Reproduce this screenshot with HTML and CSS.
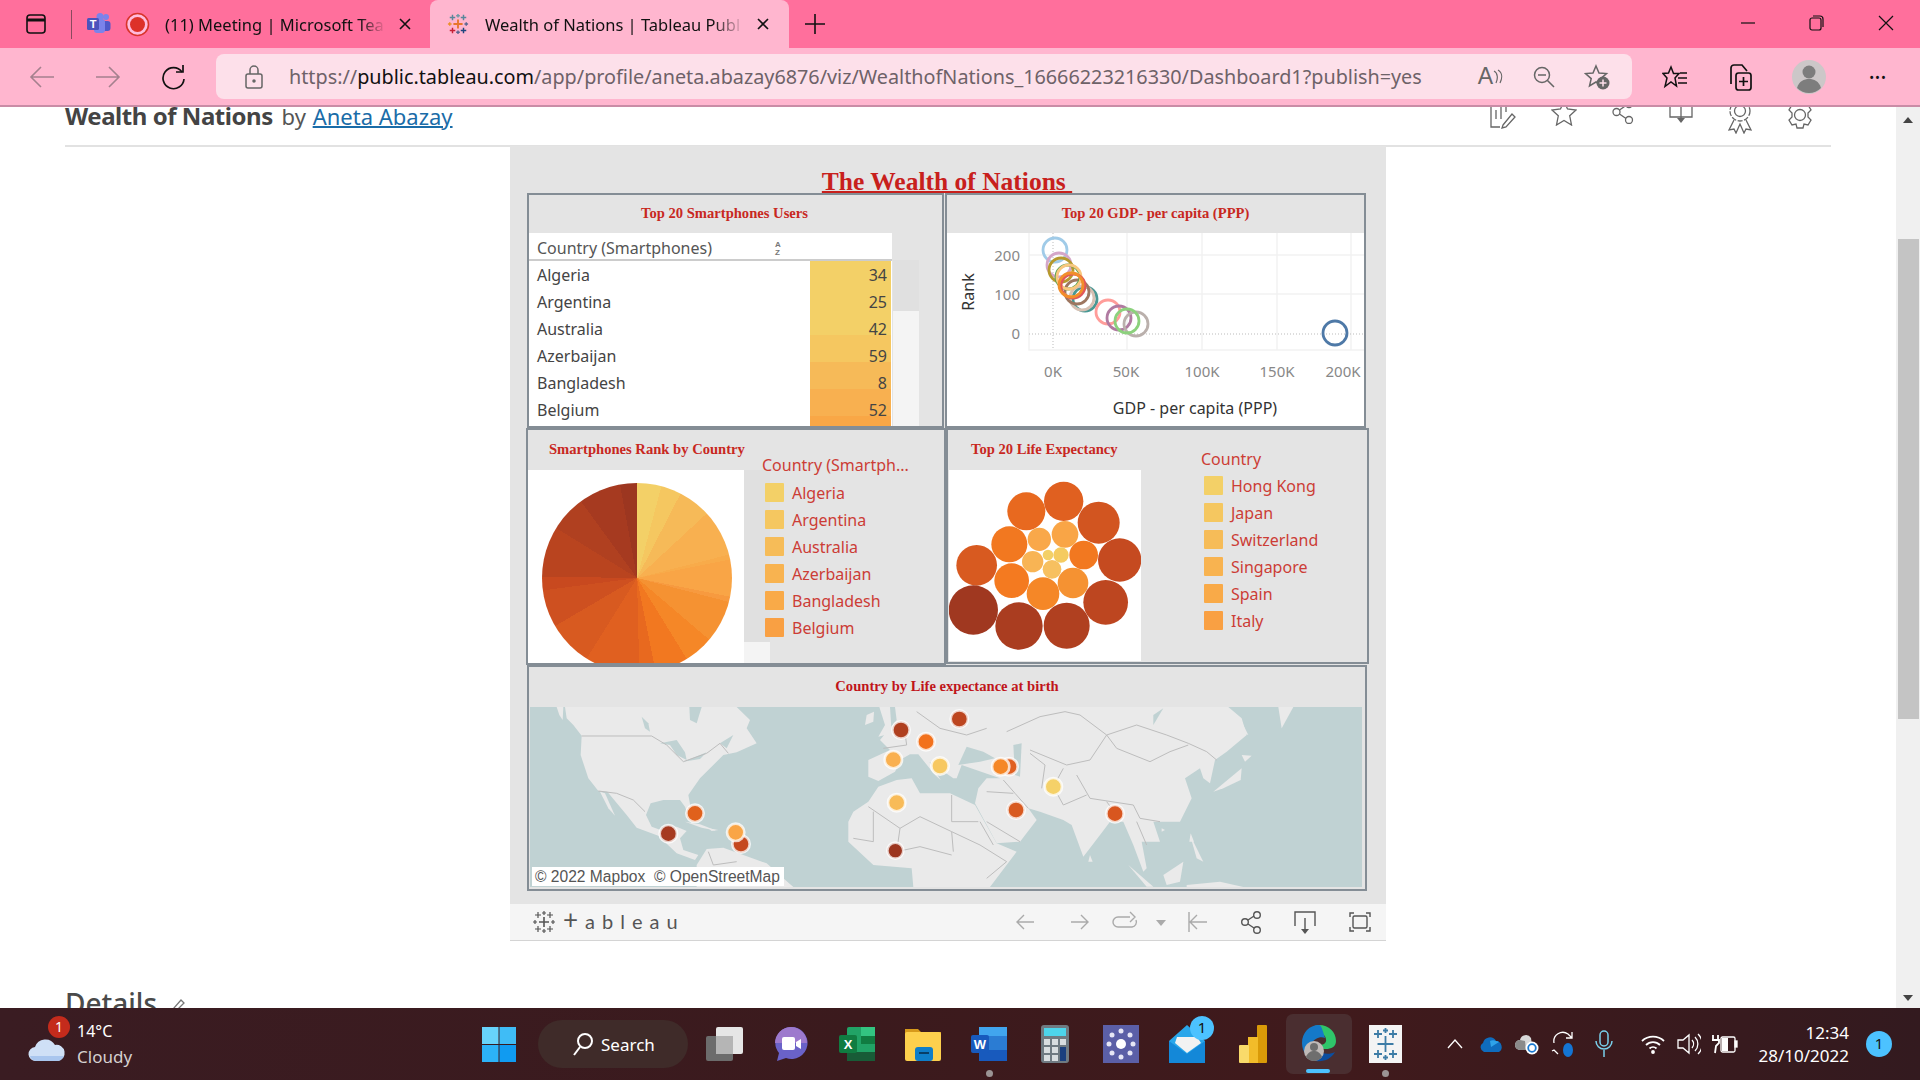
FILE: index.html
```html
<!DOCTYPE html>
<html lang="en">
<head>
  <meta charset="UTF-8" />
  <title>Wealth of Nations | Tableau Public</title>
  <link rel="stylesheet" href="styles.css">
</head>
<body>

  <svg class="defs" width="0" height="0">
    <symbol id="tab-logo" viewBox="0 0 24 24">
      <g fill="none" stroke-width="1.6">
        <path d="M12 7v10M7 12h10" stroke="#e8762b" stroke-width="2"/>
        <path d="M6 2v6M3 5h6" stroke="#5b879b"/>
        <path d="M18 2v6M15 5h6" stroke="#59879b"/>
        <path d="M6 16v6M3 19h6" stroke="#c72035"/>
        <path d="M18 16v6M15 19h6" stroke="#1f457e"/>
        <path d="M12 1v4M10 3h4" stroke="#7099a6"/>
        <path d="M12 19v4M10 21h4" stroke="#5b6591"/>
        <path d="M3 10v4M1 12h4" stroke="#eb912b"/>
        <path d="M21 10v4M19 12h4" stroke="#5c6692"/>
      </g>
    </symbol>
    <symbol id="mono-logo" viewBox="0 0 24 24">
      <g fill="none" stroke-width="1.2">
        <path d="M12 7v10M7 12h10" stroke-width="1.6"/>
        <path d="M6 2v6M3 5h6M18 2v6M15 5h6M6 16v6M3 19h6M18 16v6M15 19h6"/>
        <path d="M12 1v4M10 3h4M12 19v4M10 21h4M3 10v4M1 12h4M21 10v4M19 12h4"/>
      </g>
    </symbol>
  </svg>

  <div class="tabstrip">
    <svg class="tab-side" width="20" height="20" viewBox="0 0 20 20" fill="none" stroke="#111" stroke-width="1.6"><rect x="1" y="1" width="18" height="18" rx="3"/><path d="M1 6h18" stroke-width="3"/></svg>
    <span class="tab-sep"></span>
    <svg class="tab-teams" width="25" height="22" viewBox="0 0 25 22"><circle cx="20" cy="4" r="3" fill="#7b83eb"/><circle cx="14" cy="3.5" r="3.5" fill="#7b83eb"/><rect x="16" y="8" width="8.5" height="10" rx="3" fill="#5059c9"/><rect x="8" y="6" width="11" height="14" rx="3" fill="#7b83eb"/><rect x="1" y="5" width="12" height="12" rx="1.5" fill="#4b53bc"/><text x="7" y="14.5" class="teams-t">T</text></svg>
    <svg class="tab-rec" width="25" height="25" viewBox="0 0 25 25"><circle cx="12.5" cy="12.5" r="11" fill="#fbd" stroke="#d9342b" stroke-width="1.6"/><circle cx="12.5" cy="12.5" r="7.5" fill="#dd3129"/></svg>
    <span class="tab-title tab-title-off">(11) Meeting | Microsoft Tea</span>
    <svg class="tab-x" width="14" height="14" viewBox="0 0 14 14" stroke="#111" stroke-width="1.6"><path d="M2 2l10 10M12 2L2 12"/></svg>
    <div class="tab-active">
      <svg width="22" height="22"><use href="#tab-logo"/></svg>
      <span class="tab-title tab-title-on">Wealth of Nations | Tableau Publ</span>
      <svg class="tab-x" width="14" height="14" viewBox="0 0 14 14" stroke="#111" stroke-width="1.6"><path d="M2 2l10 10M12 2L2 12"/></svg>
    </div>
    <svg class="tab-plus" width="22" height="22" viewBox="0 0 22 22" stroke="#111" stroke-width="1.6"><path d="M11 1v20M1 11h20"/></svg>
    <div class="win-btns">
      <span class="win-btn"><svg width="14" height="14" viewBox="0 0 14 14" stroke="#111" stroke-width="1.2"><path d="M0 7h14"/></svg></span>
      <span class="win-btn"><svg width="15" height="16" viewBox="0 0 15 16" fill="none" stroke="#111" stroke-width="1.2"><rect x="1" y="3" width="11" height="12" rx="2"/><path d="M4 1h7a3 3 0 0 1 3 3v8"/></svg></span>
      <span class="win-btn"><svg width="16" height="16" viewBox="0 0 16 16" stroke="#111" stroke-width="1.2"><path d="M1 1l14 14M15 1L1 15"/></svg></span>
    </div>
  </div>

  <div class="toolbar">
    <span class="nav-btn"><svg width="26" height="24" viewBox="0 0 26 24" fill="none" stroke="#a5808e" stroke-width="1.6"><path d="M25 12H2M12 2L2 12l10 10"/></svg></span>
    <span class="nav-btn"><svg width="26" height="24" viewBox="0 0 26 24" fill="none" stroke="#a5808e" stroke-width="1.6"><path d="M1 12h23M14 2l10 10-10 10"/></svg></span>
    <span class="nav-btn"><svg width="26" height="26" viewBox="0 0 26 26" fill="none" stroke="#111" stroke-width="1.7"><path d="M21 8a10.500 10.500 0 1 0 2 7"/><path d="M22 1v7h-7"/></svg></span>
    <div class="address">
      <svg class="addr-lock" width="20" height="24" viewBox="0 0 20 24" fill="none" stroke="#666" stroke-width="1.5"><rect x="2" y="9" width="16" height="14" rx="2"/><path d="M6 9V5a4 4 0 0 1 8 0v4"/><circle cx="10" cy="16" r="1" fill="#666"/></svg>
      <span class="url">https://<b>public.tableau.com</b>/app/profile/aneta.abazay6876/viz/WealthofNations_16666223216330/Dashboard1?publish=yes</span>
      <div class="addr-icons">
        <span class="addr-btn addr-read">A<svg width="10" height="16" viewBox="0 0 10 16" fill="none" stroke="#666" stroke-width="1.2"><path d="M1 2c4 2 4 8 2 12M5 1c5 3 4 9 2 13"/></svg></span>
        <span class="addr-btn"><svg width="24" height="24" viewBox="0 0 24 24" fill="none" stroke="#666" stroke-width="1.5"><circle cx="10" cy="10" r="7.500"/><path d="M6 10h8M15.500 15.500L22 22"/></svg></span>
        <span class="addr-btn"><svg width="26" height="26" viewBox="0 0 26 26"><path d="M12 2l3 7 7.500.6-5.700 5 1.700 7.400L12 18l-6.500 4 1.700-7.400-5.700-5L9 9z" fill="none" stroke="#666" stroke-width="1.500"/><circle cx="19" cy="19" r="6.500" fill="#666"/><path d="M19 15.500v7M15.500 19h7" stroke="#fde0ea" stroke-width="1.500"/></svg></span>
      </div>
    </div>
    <span class="tool-btn tool-fav"><svg width="26" height="26" viewBox="0 0 26 26" fill="none" stroke="#111" stroke-width="1.500"><path d="M9 3l2.500 6.500H17l-4 4.500 1.500 8L9 18l-6 4.500L5 14 1 9.500l5.500-.5zM18 9h7M16 14h9M16 19h9"/></svg></span>
    <span class="tool-btn tool-coll"><svg width="26" height="28" viewBox="0 0 26 28" fill="none" stroke="#111" stroke-width="1.700"><path d="M5 21V5a3 3 0 0 1 3-3h8l5 6"/><rect x="10" y="10" width="15" height="17" rx="2.500"/><path d="M17.500 14v9M13 18.500h9"/></svg></span>
    <span class="tool-btn tool-profile"><svg width="34" height="34" viewBox="0 0 34 34"><circle cx="17" cy="17" r="17" fill="#ccc7c8"/><circle cx="17" cy="12" r="6.500" fill="#7d7d7d"/><path d="M5 28c2-7 7-9 12-9s10 2 12 9a17 17 0 0 1-24 0z" fill="#7d7d7d"/></svg></span>
    <span class="tool-btn tool-dots">&#8226;&#8226;&#8226;</span>
  </div>

  <div class="content">
    <div class="page">
      <div class="page-head">
        <div class="page-title"><strong>Wealth of Nations</strong> <span>by</span> <a href="#">Aneta Abazay</a></div>
        <div class="page-icons">
          <svg width="26" height="32" viewBox="0 0 26 32" fill="none" stroke="#666" stroke-width="1.300"><path d="M1 0v27h9M6 10v9M11 6v13M16 2v10"/><path d="M13 25l9-11 3 3-9 10-4 1z"/></svg>
          <svg width="26" height="26" viewBox="0 0 26 26" fill="none" stroke="#666" stroke-width="1.300"><path d="M13 1l3.500 8L25 10l-6.300 5.800L20.500 25 13 20.500 5.500 25l1.800-9.200L1 10l8.500-1z"/></svg>
          <svg width="22" height="24" viewBox="0 0 22 24" fill="none" stroke="#666" stroke-width="1.300"><circle cx="17" cy="4" r="3.500"/><circle cx="4.500" cy="12" r="3.500"/><circle cx="17" cy="20" r="3.500"/><path d="M7.500 10l6.500-4.500M7.500 14l6.500 4.500"/></svg>
          <svg width="24" height="24" viewBox="0 0 24 24" fill="none" stroke="#666" stroke-width="1.300"><path d="M1 0v17h22V0M12 5v14"/><path d="M8 18h8l-4 5z" fill="#666" stroke="none"/></svg>
          <svg width="24" height="34" viewBox="0 0 24 34" fill="none" stroke="#666" stroke-width="1.300"><circle cx="12" cy="11" r="10" stroke-dasharray="5 1.500"/><circle cx="12" cy="11" r="5.500"/><path d="M6 20L1 30l5-1 2 4 4-9 4 9 2-4 5 1-5-10"/></svg>
          <svg width="26" height="30" viewBox="0 0 26 30" fill="none" stroke="#666" stroke-width="1.300"><circle cx="13" cy="15" r="5.500"/><path d="M10 2h6l1 4 4-1 3 5-3 3v4l3 3-3 5-4-1-1 4h-6l-1-4-4 1-3-5 3-3v-4L2 10l3-5 4 1z"/></svg>
        </div>
      </div>

      <div class="viz">
        <div class="viz-title">The Wealth of Nations </div>

        <div class="viz-row">
          <section class="panel panel-table">
            <h3 class="panel-title">Top 20 Smartphones Users</h3>
            <div class="table-wrap">
              <div class="table">
                <div class="table-head">Country (Smartphones)<span class="sort-az">A<br>Z</span></div>
                <div class="table-body">
                  <div class="row"><span>Algeria</span><span>34</span></div>
                  <div class="row"><span>Argentina</span><span>25</span></div>
                  <div class="row"><span>Australia</span><span>42</span></div>
                  <div class="row"><span>Azerbaijan</span><span>59</span></div>
                  <div class="row"><span>Bangladesh</span><span>8</span></div>
                  <div class="row"><span>Belgium</span><span>52</span></div>
                </div>
              </div>
              <div class="vscroll vscroll-table"><div class="vthumb"></div></div>
            </div>
          </section>

          <section class="panel panel-scatter">
            <h3 class="panel-title">Top 20 GDP- per capita (PPP)</h3>
            <svg class="scatter" width="417" height="193" viewBox="947 233 417 193">
              <g stroke="#f2f2f2" stroke-width="1.500" fill="none">
                <path d="M1029 233v117h335M1127 233v117M1202 233v117M1277 233v117M1351 233v117M1029 255h335M1029 294h335"/>
              </g>
              <path d="M1053 233v117M1029 334h335" stroke="#bbb" stroke-dasharray="1 2" fill="none"/>
              <g class="sc-axis">
                <text x="1020" y="261" text-anchor="end">200</text>
                <text x="1020" y="300" text-anchor="end">100</text>
                <text x="1020" y="339" text-anchor="end">0</text>
                <text x="1053" y="377" text-anchor="middle">0K</text>
                <text x="1126" y="377" text-anchor="middle">50K</text>
                <text x="1202" y="377" text-anchor="middle">100K</text>
                <text x="1277" y="377" text-anchor="middle">150K</text>
                <text x="1343" y="377" text-anchor="middle">200K</text>
              </g>
              <text class="sc-label" transform="translate(974 292) rotate(-90)" text-anchor="middle">Rank</text>
              <text class="sc-label" x="1195" y="414" text-anchor="middle">GDP - per capita (PPP)</text>
              <g fill="none" stroke-width="2.800">
                <circle cx="1055" cy="250" r="12" stroke="#a0cbe8"/>
                <circle cx="1059" cy="265" r="12" stroke="#d4a6c8"/>
                <circle cx="1061" cy="270" r="12" stroke="#b6992d"/>
                <circle cx="1085" cy="299" r="12" stroke="#499894"/>
                <circle cx="1082" cy="298" r="12" stroke="#d7c0b3"/>
                <circle cx="1077" cy="292" r="12" stroke="#9d7660"/>
                <circle cx="1068" cy="277" r="12" stroke="#59a14f"/>
                <circle cx="1069" cy="277" r="12" stroke="#f9c77f"/>
                <circle cx="1072" cy="285" r="12" stroke="#f1ce63"/>
                <circle cx="1073" cy="286" r="12" stroke="#e15759"/>
                <circle cx="1071" cy="285" r="12" stroke="#f28e2b"/>
                <circle cx="1108" cy="312" r="12" stroke="#ff9d9a"/>
                <circle cx="1119" cy="318" r="12" stroke="#b07aa1"/>
                <circle cx="1136" cy="324" r="12" stroke="#bab0ac"/>
                <circle cx="1127" cy="321" r="12" stroke="#8cd17d"/>
                <circle cx="1335" cy="333" r="12" stroke="#4e79a7"/>
              </g>
            </svg>
          </section>
        </div>

        <div class="viz-row viz-row-mid">
          <section class="panel panel-pie">
            <div class="plot-col">
              <h3 class="panel-title title-left">Smartphones Rank by Country</h3>
              <div class="plot-body">
                <div class="pie-box"><div class="pie"></div></div>
                <div class="vscroll vscroll-pie"><div class="vthumb"></div></div>
              </div>
            </div>
            <div class="legend legend-pie">
              <div class="legend-title">Country (Smartph...</div>
              <div class="legend-item"><i class="c1"></i>Algeria</div>
              <div class="legend-item"><i class="c2"></i>Argentina</div>
              <div class="legend-item"><i class="c3"></i>Australia</div>
              <div class="legend-item"><i class="c4"></i>Azerbaijan</div>
              <div class="legend-item"><i class="c5"></i>Bangladesh</div>
              <div class="legend-item"><i class="c6"></i>Belgium</div>
            </div>
          </section>

          <section class="panel panel-bubble">
            <div class="plot-col plot-col-bubble">
              <h3 class="panel-title title-left">Top 20 Life Expectancy</h3>
              <svg class="bubbles" width="192" height="191" viewBox="27 135 576 573">
                <circle cx="371" cy="229" r="59" fill="#e06020"/>
                <circle cx="259" cy="259" r="57" fill="#e8691f"/>
                <circle cx="476" cy="293" r="63" fill="#d25520"/>
                <circle cx="539" cy="405" r="65" fill="#c54a20"/>
                <circle cx="208" cy="358" r="54" fill="#f27820"/>
                <circle cx="110" cy="421" r="61" fill="#d85a20"/>
                <circle cx="298" cy="343" r="35" fill="#f9a84a"/>
                <circle cx="375" cy="328" r="40" fill="#f9a546"/>
                <circle cx="431" cy="390" r="43" fill="#f27820"/>
                <circle cx="324" cy="390" r="16" fill="#f3d067"/>
                <circle cx="363" cy="390" r="23" fill="#f5cb60"/>
                <circle cx="278" cy="410" r="32" fill="#f8b454"/>
                <circle cx="336" cy="433" r="28" fill="#f7c060"/>
                <circle cx="215" cy="467" r="52" fill="#f47a20"/>
                <circle cx="399" cy="474" r="46" fill="#f59232"/>
                <circle cx="309" cy="506" r="49" fill="#f58727"/>
                <circle cx="100" cy="555" r="74" fill="#a03820"/>
                <circle cx="237" cy="603" r="71" fill="#aa3d20"/>
                <circle cx="380" cy="602" r="69" fill="#b04020"/>
                <circle cx="497" cy="532" r="67" fill="#bd4620"/>
              </svg>
            </div>
            <div class="legend legend-bubble">
              <div class="legend-title">Country</div>
              <div class="legend-item"><i class="c1"></i>Hong Kong</div>
              <div class="legend-item"><i class="c2"></i>Japan</div>
              <div class="legend-item"><i class="c3"></i>Switzerland</div>
              <div class="legend-item"><i class="c4"></i>Singapore</div>
              <div class="legend-item"><i class="c5"></i>Spain</div>
              <div class="legend-item"><i class="c6"></i>Italy</div>
            </div>
          </section>
        </div>

        <section class="panel panel-map">
          <h3 class="panel-title title-map">Country by Life expectance at birth</h3>
          <div class="map">
            <svg width="832" height="180" viewBox="30 126 2496 540">
              <rect x="30" y="126" width="2496" height="540" fill="#c0d2d3"/>
              <g fill="#eaeaea">
                <path d="M110 126L130 126L128 165L118 150Z"/>
                <path d="M135 126L140 160L160 180L185 212L182 270L205 340L235 378L262 380L320 450L350 488L415 512L470 565L525 585L535 570L490 555L480 520L500 498L470 485L430 498L395 485L378 450L392 415L430 405L480 405L495 425L510 465L515 445L505 390L540 340L580 300L610 270L650 262L710 235L680 190L690 165L650 126Z"/>
                <path d="M240 380L255 385L285 452L265 430Z"/>
                <path d="M530 600L560 552L610 548L670 570L740 595L790 640L820 666L530 666Z"/>
                <path d="M495 470L540 478L590 497L545 488Z"/>
                <path d="M565 490L595 495L575 498Z"/>
                <path d="M1035 180L1040 150L1062 140L1060 170Z"/>
                <path d="M1078 126L1110 126L1115 205L1075 215L1095 180Z"/>
                <path d="M1125 126L1130 165L1080 225L1110 255L1045 285L1045 335L1075 348L1125 320L1145 282L1170 268L1195 268L1245 330L1262 345L1228 290L1300 340L1310 340L1325 300L1440 340L1400 340L1375 370L1365 415L1430 535L1500 530L1550 465L1525 430L1560 440L1630 465L1655 480L1690 575L1740 510L1770 470L1810 470L1840 540L1870 620L1880 610L1865 530L1920 530L1900 470L1980 470L2015 400L1995 340L2040 310L2050 340L2070 355L2085 285L2120 260L2180 210L2165 160L2125 126Z"/>
                <path d="M985 470L1000 440L1045 410L1075 365L1130 345L1175 340L1200 385L1290 385L1365 420L1430 535L1490 560L1410 666L1180 666L1175 610L1060 600L985 530Z"/>
                <path d="M1710 570L1718 590L1705 590Z"/>
                <path d="M2080 380L2165 310L2162 345L2110 370Z"/>
                <path d="M2165 270L2195 272L2175 290Z"/>
                <path d="M2165 170L2185 210L2172 205Z"/>
                <path d="M2012 505L2022 530L2008 530Z"/>
                <path d="M1925 490L1935 495L1925 500Z"/>
                <path d="M2275 126L2320 126L2285 190Z"/>
                <path d="M1825 600L1900 665L1880 665Z"/>
                <path d="M1930 630L1990 590L1980 650L1940 660Z"/>
                <path d="M2010 510L2050 590L2030 580Z"/>
                <path d="M2000 660L2100 650L2170 666L2000 666Z"/>
              </g>
              <g fill="#c0d2d3">
                <path d="M508 126L545 126L530 175L510 165Z"/>
                <path d="M365 155L385 175L390 200L375 190Z"/>
                <path d="M420 235L470 225L495 262L500 285L470 270L450 240Z"/>
                <path d="M490 290L560 262L540 282Z"/>
                <path d="M600 235L640 210L620 250Z"/>
                <path d="M1315 300L1340 245L1390 260L1425 280L1380 290Z"/>
                <path d="M1480 240L1505 235L1500 335L1485 330Z"/>
                <path d="M1900 150L1930 130L1900 180Z"/>
              </g>
              <g fill="none" stroke="#bdbdbd" stroke-width="3">
                <path d="M185 213L395 213L440 240L490 290L560 265L600 235L625 265"/>
                <path d="M235 378L290 385L340 405L375 440"/>
                <path d="M565 560L580 600L650 590M1090 250L1160 240L1150 170M1190 140L1260 190L1340 210L1400 190"/>
                <path d="M1460 200L1560 155L1635 140L1680 150L1760 210L1850 180L1940 210L2005 235L2060 260L2090 285"/>
                <path d="M1760 210L1790 250L1890 290L1950 260L2005 240"/>
                <path d="M1530 255L1640 300L1710 285L1760 210"/>
                <path d="M1670 330L1710 400L1840 420L1860 460L1920 470"/>
                <path d="M1565 370L1575 300L1530 265M1630 310L1600 365L1630 420L1700 390"/>
                <path d="M1450 345L1485 385L1525 430M1400 380L1480 385"/>
                <path d="M1295 390L1295 470L1375 470M1380 470L1420 540M1045 425L1140 490L1200 455L1295 500L1300 560"/>
                <path d="M1060 440L1060 530M1140 490L1130 560L1200 545L1295 570M1000 520L1060 530"/>
                <path d="M1295 500L1380 540L1460 590L1400 640"/>
                <path d="M1760 410L1790 450M1850 470L1880 540M1400 470L1500 530"/>
              </g>
              <g stroke="#fff" stroke-opacity=".75" stroke-width="8">
                <circle cx="1143" cy="195" r="26" fill="#b04020"/>
                <circle cx="1218" cy="230" r="26" fill="#f2711c"/>
                <circle cx="1120" cy="284" r="26" fill="#f9b050"/>
                <circle cx="1260" cy="303" r="26" fill="#f7c860"/>
                <circle cx="1130" cy="413" r="26" fill="#f8bb58"/>
                <circle cx="525" cy="445" r="26" fill="#e0611c"/>
                <circle cx="445" cy="506" r="26" fill="#a63a20"/>
                <circle cx="663" cy="537" r="26" fill="#c5481f"/>
                <circle cx="647" cy="502" r="26" fill="#f9a546"/>
                <circle cx="1126" cy="557" r="24" fill="#9c3620"/>
                <circle cx="1318" cy="162" r="26" fill="#bd4620"/>
                <circle cx="1467" cy="305" r="26" fill="#e06020"/>
                <circle cx="1442" cy="305" r="26" fill="#f58727"/>
                <circle cx="1600" cy="365" r="26" fill="#f5d168"/>
                <circle cx="1488" cy="435" r="26" fill="#d85a20"/>
                <circle cx="1785" cy="446" r="26" fill="#d8561f"/>
              </g>
            </svg>
            <span class="map-credit">&copy; 2022 Mapbox&nbsp; &copy; OpenStreetMap</span>
          </div>
        </section>

        <div class="viz-toolbar">
          <svg class="viz-logo" width="24" height="24"><use href="#mono-logo"/></svg>
          <span class="viz-wordmark"><span>+</span>ableau</span>
          <svg class="viz-tools" width="366" height="26" viewBox="1010 908 366 26" fill="none" stroke-width="1.400">
            <g stroke="#aaa">
              <path d="M1034 921h-17M1024 914l-7 7 7 7"/>
              <path d="M1071 921h17M1081 914l7 7-7 7"/>
              <path d="M1130 916h-12a5 5 0 0 0 0 10h14a5 5 0 0 0 4-7M1130 911l5 5-5 5"/>
              <path d="M1189 911v20M1207 921h-17M1197 914l-7 7 7 7"/>
            </g>
            <path d="M1156 919h10l-5 6z" fill="#aaa"/>
            <g stroke="#555">
              <circle cx="1257" cy="914" r="3.300"/><circle cx="1245" cy="921" r="3.300"/><circle cx="1257" cy="929" r="3.300"/>
              <path d="M1248 919l6-4M1248 923l6 4"/>
              <path d="M1295 925v-14h20v14M1305 917v13"/>
              <path d="M1350 916v-4h4M1366 912h4v4M1350 926v4h4M1366 930h4v-4"/>
              <rect x="1353" y="915" width="14" height="12" rx="1.500"/>
            </g>
            <path d="M1301 928h8l-4 5z" fill="#555"/>
          </svg>
        </div>
      </div>

      <div class="details">Details
        <svg width="15" height="16" viewBox="0 0 15 16" fill="none" stroke="#777" stroke-width="1.300"><path d="M1 15l2-5L11 1l3 3-8 8z"/></svg>
      </div>
    </div>

    <div class="scrollbar">
      <span class="arrow-up"></span>
      <div class="scroll-thumb"></div>
      <span class="arrow-down"></span>
    </div>
  </div>

  <div class="taskbar">
    <div class="weather">
      <div class="weather-icon">
        <svg width="38" height="30" viewBox="0 0 38 30"><path d="M8 29a7 7 0 0 1-1-14 11 11 0 0 1 20-2 8 8 0 0 1 3 16z" fill="#cfe0f6"/><path d="M8 29a7 7 0 0 1-6-5h34a8 8 0 0 1-6 5z" fill="#a9c6ee"/></svg>
        <span class="badge badge-red">1</span>
      </div>
      <div class="weather-text"><div>14&deg;C</div><div class="weather-sub">Cloudy</div></div>
    </div>
    <svg class="win-logo" width="34" height="35" viewBox="0 0 34 35"><rect width="16.500" height="17" fill="#67d3fb"/><rect x="17.500" width="16.500" height="17" fill="#3fbcf6"/><rect y="18" width="16.500" height="17" fill="#2cb2f7"/><rect x="17.500" y="18" width="16.500" height="17" fill="#109bf1"/></svg>
    <div class="search-pill">
      <svg width="20" height="24" viewBox="0 0 20 24" fill="none" stroke="#fff" stroke-width="2"><circle cx="12" cy="9" r="7"/><path d="M7 15l-6 8"/></svg>
      Search
    </div>
    <div class="task-apps">
      <span class="app"><svg width="38" height="34" viewBox="0 0 38 34"><rect x="10" y="0" width="27" height="27" rx="2" fill="#e6e6e6"/><rect x="0" y="9" width="27" height="25" rx="2" fill="#6c6c6c"/><rect x="10" y="9" width="17" height="18" fill="#b5b5b5"/></svg></span>
      <span class="app"><svg width="34" height="36" viewBox="0 0 34 36"><path d="M17 1a16 16 0 1 1-5 31l-9 3 2-8A16 16 0 0 1 17 1z" fill="#6a62c8"/><path d="M17 1a16 16 0 0 1 16 16H1A16 16 0 0 1 17 1z" fill="#9d79cd"/><rect x="8" y="11" width="13" height="13" rx="2" fill="#fff"/><path d="M22 16l5-3v10l-5-3z" fill="#fff"/></svg></span>
      <span class="app"><svg width="36" height="34" viewBox="0 0 36 34"><rect x="8" width="28" height="34" rx="2" fill="#21a366"/><rect x="22" width="14" height="9" fill="#33c481"/><rect x="8" y="25" width="28" height="9" fill="#185c37"/><rect x="22" y="9" width="14" height="8" fill="#107c41"/><rect y="8" width="18" height="18" rx="2" fill="#107c41"/><text x="9" y="22" class="app-t">X</text></svg></span>
      <span class="app"><svg width="36" height="34" viewBox="0 0 36 34"><path d="M0 2h13l3 3h20v8H0z" fill="#d79a1b"/><rect y="5" width="36" height="29" rx="2" fill="#fdd04d"/><rect x="10" y="20" width="18" height="14" rx="3" fill="#0f7ec8"/><rect x="14" y="25" width="10" height="2" fill="#083e66"/></svg></span>
      <span class="app app-dot"><svg width="36" height="38" viewBox="0 0 36 38"><rect x="8" y="2" width="28" height="34" rx="2" fill="#2b7cd3"/><rect x="8" y="2" width="28" height="9" fill="#41a5ee"/><rect x="8" y="25" width="28" height="11" fill="#185abd"/><rect y="10" width="18" height="18" rx="2" fill="#185abd"/><text x="9" y="24" class="app-t">W</text></svg></span>
      <span class="app"><svg width="28" height="38" viewBox="0 0 28 38"><rect width="28" height="38" rx="3" fill="#6f7a82"/><rect x="3" y="3" width="22" height="8" fill="#4dd5ec"/><g fill="#d8dde0"><rect x="3" y="14" width="6" height="6"/><rect x="11" y="14" width="6" height="6"/><rect x="19" y="14" width="6" height="6"/><rect x="3" y="22" width="6" height="6"/><rect x="11" y="22" width="6" height="6"/><rect x="3" y="30" width="6" height="6"/><rect x="11" y="30" width="6" height="6"/></g><rect x="19" y="22" width="6" height="14" fill="#1b3f7e"/></svg></span>
      <span class="app"><svg width="36" height="38" viewBox="0 0 36 38"><rect width="36" height="38" fill="#5b5fa7"/><circle cx="18" cy="19" r="5" fill="#fff"/><g fill="#e6e6f5"><circle cx="18" cy="6" r="2.500"/><circle cx="18" cy="32" r="2.500"/><circle cx="6" cy="19" r="2.500"/><circle cx="30" cy="19" r="2.500"/><circle cx="9" cy="10" r="2.500"/><circle cx="27" cy="10" r="2.500"/><circle cx="9" cy="28" r="2.500"/><circle cx="27" cy="28" r="2.500"/></g></svg></span>
      <span class="app app-badged"><svg width="36" height="38" viewBox="0 0 36 38"><path d="M0 16L18 0l18 16v22H0z" fill="#29a6ea"/><path d="M8 12h20l4 6-14 10L6 18z" fill="#f2f2f2"/><path d="M0 16l18 13 18-13v22H0z" fill="#1488d8"/></svg><span class="badge badge-blue">1</span></span>
      <span class="app"><svg width="28" height="38" viewBox="0 0 28 38"><rect x="18" width="10" height="38" rx="1" fill="#d99a08"/><rect x="9" y="12" width="10" height="26" fill="#f2bc2a"/><rect y="20" width="10" height="18" rx="1" fill="#f9da6a"/></svg></span>
      <span class="app app-edge"><svg width="36" height="40" viewBox="0 0 36 40"><path d="M18 1c10 0 17 7 17 16 0 6-5 8-10 8s-7-2-7-4c3 0 8-1 7-6C24 8 12 5 6 12 9 5 13 1 18 1z" fill="#2fc56a"/><path d="M18 1C8 1 1 9 1 19c0 9 6 17 14 18-6-4-8-12-4-18 2-4 8-7 13-5C21 4 20 1 18 1z" fill="#1479c9"/><path d="M15 37c8 1 15-2 19-9-5 3-13 2-17-1z" fill="#0b4ea0"/><circle cx="13" cy="27" r="10" fill="#bfbab8"/><circle cx="13" cy="23" r="4" fill="#6e6e6e"/><path d="M5 33c2-5 5-6 8-6s6 1 8 6a10 10 0 0 1-16 0z" fill="#6e6e6e"/></svg></span>
      <span class="app app-dot"><svg width="33" height="38" viewBox="0 0 33 38"><rect width="33" height="38" fill="#f4f4f4"/><g stroke="#3c7ca6" stroke-width="1.800"><path d="M16.500 11v16M8.500 19h16"/><path d="M9 5v8M5 9h8M24 5v8M20 9h8M9 25v8M5 29h8M24 25v8M20 29h8"/><path d="M16.500 3v5M14 5.500h5M16.500 30v5M14 32.500h5"/></g></svg></span>
    </div>
    <div class="tray">
      <span class="tray-btn"><svg width="16" height="10" viewBox="0 0 16 10" fill="none" stroke="#fff" stroke-width="1.300"><path d="M1 9l7-8 7 8"/></svg></span>
      <span class="tray-btn"><svg width="24" height="18" viewBox="0 0 24 18"><path d="M5 17a5 5 0 0 1-1-9 7 7 0 0 1 13-2 6 6 0 0 1 3 11z" fill="#0f6cbd"/><path d="M11 6a7 7 0 0 1 6 0 6 6 0 0 1 3 1l-8 5z" fill="#2fa2e8"/></svg></span>
      <span class="tray-btn"><svg width="24" height="22" viewBox="0 0 24 22"><path d="M5 17a5 5 0 0 1 0-10 6 6 0 0 1 11-2l1 7-5 5z" fill="#d8d8d8"/><path d="M5 17a5 5 0 0 1 0-10l5 1 1 9z" fill="#8a8a8a"/><circle cx="17" cy="15" r="6.500" fill="#fff"/><circle cx="17" cy="15" r="3.800" fill="none" stroke="#1a78d0" stroke-width="1.800"/></svg></span>
      <span class="tray-btn"><svg width="26" height="28" viewBox="0 0 26 28" fill="none" stroke="#fff" stroke-width="1.300"><path d="M4 13a9 9 0 0 1 14-9l4 4M22 2v6h-6M2 21l2-1 4 4"/><ellipse cx="18" cy="20" rx="5" ry="7" fill="#1475d4" stroke="none"/></svg></span>
      <span class="tray-btn tray-mic"><svg width="18" height="28" viewBox="0 0 18 28" fill="none" stroke="#79d0ec" stroke-width="1.500"><rect x="5" y="1" width="8" height="15" rx="4"/><path d="M1 11a8 8 0 0 0 16 0M9 20v7"/></svg></span>
      <span class="tray-btn tray-wifi"><svg width="24" height="20" viewBox="0 0 24 20" fill="none" stroke="#fff" stroke-width="1.800"><path d="M1 7a16 16 0 0 1 22 0M5 11a10 10 0 0 1 14 0M8.500 14.500a5 5 0 0 1 7 0"/><circle cx="12" cy="18" r="1" fill="#fff"/></svg></span>
      <span class="tray-btn"><svg width="24" height="22" viewBox="0 0 24 22" fill="none" stroke="#fff" stroke-width="1.300"><path d="M1 7h5l6-5v18l-6-5H1zM15 7a6 6 0 0 1 0 8M18 4a10 10 0 0 1 0 14M21 1a14 14 0 0 1 0 20"/></svg></span>
      <span class="tray-btn"><svg width="26" height="22" viewBox="0 0 26 22" fill="none" stroke="#fff" stroke-width="1.300"><rect x="9" y="4" width="14" height="15" rx="1.500"/><rect x="23" y="8" width="2" height="6" fill="#fff"/><path d="M1 2v5M6 2v5" stroke-width="1.800"/><path d="M0 7h7v3l-3 3-1 7" stroke-width="1.800"/><rect x="10" y="5" width="6" height="13" fill="#fff" stroke="none"/></svg></span>
    </div>
    <div class="clock"><div>12:34</div><div>28/10/2022</div></div>
    <span class="notify">1</span>
  </div>

</body>
</html>
```

FILE: styles.css
```css
* {
  margin: 0;
  padding: 0;
  box-sizing: border-box;
}

html, body {
  width: 1920px;
  height: 1080px;
  overflow: hidden;
}

body {
  font-family: "Noto Sans", sans-serif;
  background: #fff;
  display: flex;
  flex-direction: column;
  color: #333;
}

.defs {
  position: absolute;
}

svg {
  flex: none;
  display: block;
}

/* browser tabs */
.tabstrip {
  height: 48px;
  background: #ff6f9c;
  display: flex;
  align-items: center;
  padding-left: 26px;
  flex: none;
  position: relative;
  z-index: 3;
}

.tab-sep {
  width: 1px;
  height: 29px;
  margin-left: 25px;
  background: #8a4a5e;
}

.tab-teams {
  margin-left: 14px;
}

.teams-t {
  font: 700 11px "Liberation Sans", sans-serif;
  fill: #fff;
  text-anchor: middle;
}

.tab-rec {
  margin-left: 14px;
}

.tab-title {
  font-family: "Noto Sans", sans-serif;
  font-size: 16.5px;
  color: #111;
  white-space: nowrap;
  -webkit-mask-image: linear-gradient(to right, #000 88%, transparent);
  mask-image: linear-gradient(to right, #000 88%, transparent);
}

.tab-title-off {
  margin-left: 15px;
  width: 221px;
}

.tab-title-on {
  margin-left: 16px;
  width: 259px;
}

.tab-x {
  margin-left: 12px;
}

.tab-active {
  width: 359px;
  height: 48px;
  margin-left: 18px;
  padding-left: 17px;
  background: #ffb6cf;
  border-radius: 8px 8px 0 0;
  display: flex;
  align-items: center;
}

.tab-plus {
  margin-left: 15px;
}

.win-btns {
  margin-left: auto;
  display: flex;
}

.win-btn {
  width: 69px;
  height: 48px;
  display: flex;
  align-items: center;
  justify-content: center;
  padding-bottom: 2px;
}

/* browser toolbar */
.toolbar {
  height: 59px;
  flex: none;
  background: #ffb6cf;
  border-bottom: 2px solid #c98ca6;
  display: flex;
  align-items: flex-start;
  padding-left: 9px;
  position: relative;
  z-index: 2;
}

.nav-btn {
  width: 66px;
  height: 57px;
  display: flex;
  align-items: center;
  justify-content: center;
}

.address {
  width: 1416px;
  height: 45px;
  margin: 6px 0 0 9px;
  padding: 0 9px 0 28px;
  background: #fde0ea;
  border-radius: 8px;
  display: flex;
  align-items: center;
}

.url {
  margin-left: 25px;
  font-size: 19.8px;
  color: #6e6268;
  white-space: nowrap;
}

.url b {
  font-weight: 400;
  color: #111;
}

.addr-icons {
  margin-left: auto;
  display: flex;
}

.addr-btn {
  width: 53px;
  display: flex;
  align-items: center;
  justify-content: center;
}

.addr-read {
  font-size: 23px;
  font-family: "Liberation Sans", sans-serif;
  color: #666;
}

.tool-btn {
  width: 66px;
  height: 57px;
  display: flex;
  align-items: center;
  justify-content: center;
}

.tool-fav {
  margin-left: 10px;
}

.tool-coll {
  margin-left: -2px;
}

.tool-profile {
  margin-left: 4px;
}

.tool-dots {
  margin-left: 3px;
  font-size: 13px;
  letter-spacing: 1px;
  color: #111;
}

/* page body */
.content {
  flex: 1;
  display: flex;
  min-height: 0;
}

.page {
  flex: 1;
  padding: 0 65px;
}

.page-head {
  height: 40px;
  border-bottom: 2px solid #e2e2e2;
  display: flex;
  justify-content: space-between;
}

.page-title {
  font-size: 22px;
  line-height: 30px;
  height: 18px;
  margin-top: -6px;
  white-space: nowrap;
  color: #555;
}

.page-title strong {
  font-size: 24px;
  color: #444;
  letter-spacing: -.45px;
}

.page-title span {
  margin-left: 3px;
}

.page-title a {
  color: #1a6ca8;
  margin-left: 1px;
  text-decoration-thickness: 2px;
}

.page-icons {
  display: flex;
  align-items: flex-start;
  margin-top: -7px;
  margin-right: 18px;
  height: 34px;
  gap: 35px;
}

.viz {
  width: 876px;
  margin: -1px auto 0;
  background: #e4e4e4;
}

.viz-title {
  height: 47px;
  padding: 20px 2px 0 0;
  text-align: center;
  white-space: pre;
  font: 700 25.5px/32px "Liberation Serif", serif;
  color: #c8201c;
  text-decoration: underline;
  text-decoration-thickness: 2px;
  text-underline-offset: 1px;
  position: relative;
  z-index: 1;
}

.viz-row {
  display: flex;
  margin-left: 17px;
  gap: 1px;
}

.viz-row-mid {
  margin-left: 16px;
  gap: 0;
}

.panel {
  border: 2px solid #848d95;
  background: #e4e4e4;
}

.panel-title {
  font: 700 14.6px/36px "Liberation Serif", serif;
  color: #c8281f;
  text-align: center;
  height: 38px;
  white-space: nowrap;
}

.panel-table {
  width: 417px;
  height: 235px;
}

.panel-table .panel-title {
  padding-right: 22px;
}

.panel-scatter {
  width: 421px;
  height: 235px;
}

.scatter {
  background: #fff;
}

.sc-axis {
  font-size: 15px;
  fill: #888;
}

.sc-label {
  font-size: 16px;
  fill: #333;
}

.table-wrap {
  display: flex;
  gap: 1px;
}

.table {
  width: 363px;
}

.table-head {
  height: 28px;
  padding-left: 8px;
  background: #fff;
  border-bottom: 2px solid #ccc;
  font-size: 16px;
  line-height: 31px;
  color: #555;
  position: relative;
}

.sort-az {
  position: absolute;
  left: 246px;
  top: 8px;
  font: 700 8px/8px "Liberation Sans", sans-serif;
  color: #777;
}

.table-body {
  height: 165px;
  overflow: hidden;
  background-color: #fff;
  background-image: linear-gradient(to bottom,
    #f3d067 0 74px, #f5c760 74px 101px, #f6ba58 101px 128px,
    #f8b050 128px 155px, #f9a746 155px 165px);
  background-size: 81px 100%;
  background-position: right 1px top 0;
  background-repeat: no-repeat;
}

.row {
  height: 27px;
  padding: 0 5px 0 8px;
  display: flex;
  justify-content: space-between;
  font-size: 16px;
  line-height: 29px;
  color: #444;
}

.vscroll {
  width: 26px;
  background: #f4f4f4;
}

.vthumb {
  background: #e0e0e0;
}

.vscroll-table {
  margin-top: 27px;
  height: 166px;
}

.vscroll-table .vthumb {
  height: 51px;
}

.vscroll-pie {
  height: 193px;
}

.vscroll-pie .vthumb {
  height: 172px;
}

.panel-pie {
  width: 420px;
  height: 237px;
  display: flex;
  overflow: hidden;
}

.plot-col {
  width: 242px;
  flex: none;
}

.title-left {
  text-align: left;
  padding-left: 21px;
  height: 40px;
  line-height: 38px;
}

.plot-body {
  display: flex;
}

.pie-box {
  width: 216px;
  height: 193px;
  background: #fff;
  overflow: hidden;
  padding: 13px 0 0 14px;
}

.pie {
  width: 190px;
  height: 190px;
  border-radius: 50%;
  background: conic-gradient(
    #f3d067 0 14.9deg, #f5c760 14.9deg 27.3deg, #f6ba58 27.3deg 47.2deg,
    #f8b050 47.2deg 75.7deg, #f8ab4a 75.7deg 78.8deg, #f9a546 78.8deg 101.4deg,
    #f79a3f 101.4deg 104.6deg, #f59232 104.6deg 130.5deg, #f58727 130.5deg 148.4deg,
    #f27820 148.4deg 168.8deg, #e8691f 168.8deg 178.6deg, #e06020 178.6deg 212deg,
    #d85a20 212deg 239.6deg, #ce5020 239.6deg 262.5deg, #c8491f 262.5deg 270.8deg,
    #b9441f 270.8deg 301.7deg, #b04020 301.7deg 323.8deg, #a63a20 323.8deg 349.7deg,
    #9c3620 349.7deg 360deg);
}

.panel-bubble {
  width: 423px;
  height: 236px;
  display: flex;
}

.plot-col-bubble {
  width: 193px;
  padding-left: 1px;
}

.panel-bubble .title-left {
  padding-left: 22px;
}

.bubbles {
  background: #fff;
}

.legend {
  position: relative;
  font-size: 16px;
  color: #cc3d36;
}

.legend-pie {
  margin-left: -8px;
  padding-top: 25px;
}

.legend-pie .legend-title {
  height: 24px;
}

.legend-bubble {
  margin-left: 60px;
  padding-top: 19px;
}

.legend-title {
  height: 23px;
  line-height: 20px;
  white-space: nowrap;
}

.legend-item {
  height: 27px;
  display: flex;
  align-items: center;
  padding-left: 3px;
  gap: 8px;
  white-space: nowrap;
}

.legend-item i {
  width: 19px;
  height: 19px;
  border-radius: 1px;
}

.c1 { background: #f3d067; }
.c2 { background: #f5c760; }
.c3 { background: #f6bc58; }
.c4 { background: #f8b350; }
.c5 { background: #f9aa48; }
.c6 { background: #f9a043; }

.panel-map {
  width: 840px;
  height: 226px;
  margin-left: 17px;
}

.title-map {
  height: 40px;
  line-height: 38px;
  color: #c0141a;
}

.map {
  width: 832px;
  height: 180px;
  margin-left: 1px;
  position: relative;
}

.map-credit {
  position: absolute;
  left: 2px;
  bottom: 1px;
  width: 252px;
  height: 19px;
  padding-left: 3px;
  background: #fff;
  font: 15.6px/19px "Liberation Sans", sans-serif;
  color: #555;
  white-space: nowrap;
}

.viz-toolbar {
  height: 37px;
  margin-top: 13px;
  background: #f5f5f5;
  border-bottom: 1px solid #d4d4d4;
  display: flex;
  align-items: center;
  padding-left: 22px;
}

.viz-logo {
  stroke: #555;
}

.viz-wordmark {
  margin: -2px 0 0 7px;
  font: 20px/24px "Lato", sans-serif;
  letter-spacing: 7px;
  color: #555;
}

.viz-wordmark span {
  font-size: 26px;
  line-height: 20px;
}

.viz-tools {
  margin-left: auto;
  margin-right: 10px;
}

.details {
  margin-top: 44px;
  font-size: 28px;
  font-weight: 500;
  line-height: 36px;
  color: #4a4a4a;
  display: flex;
  align-items: flex-start;
  gap: 13px;
}

.details svg {
  margin-top: 14px;
}

/* page scrollbar */
.scrollbar {
  width: 24px;
  background: #f0f0f0;
  display: flex;
  flex-direction: column;
  align-items: center;
  flex: none;
}

.arrow-up {
  margin-top: 10px;
  border: 5px solid transparent;
  border-top: 0;
  border-bottom: 6px solid #444;
}

.scroll-thumb {
  width: 21px;
  height: 480px;
  margin: 116px 0 auto;
  background: #c4c4c4;
}

.arrow-down {
  margin-bottom: 7px;
  border: 5px solid transparent;
  border-bottom: 0;
  border-top: 6px solid #444;
}

/* windows taskbar */
.taskbar {
  height: 72px;
  flex: none;
  background: linear-gradient(to right, #3a1c22, #3b1a1d 45%, #401a1c 70%, #331a1f);
  display: flex;
  align-items: center;
  color: #fff;
  font-family: "Noto Sans", sans-serif;
  position: relative;
  z-index: 2;
}

.weather {
  width: 482px;
  padding-left: 28px;
  display: flex;
  align-items: center;
}

.weather-icon {
  position: relative;
  margin-top: 6px;
}

.badge {
  position: absolute;
  border-radius: 50%;
  font-size: 14px;
  text-align: center;
  color: #fff;
}

.badge-red {
  width: 22px;
  height: 22px;
  line-height: 21px;
  left: 20px;
  top: -16px;
  background: #c42b1c;
}

.weather-text {
  margin-left: 11px;
  font-size: 16px;
  line-height: 25px;
}

.weather-sub {
  font-size: 17px;
  color: #d5d0d0;
}

.win-logo {
  margin-right: 22px;
}

.search-pill {
  width: 150px;
  height: 48px;
  margin-right: 4px;
  border-radius: 24px;
  background: #3f2b29;
  display: flex;
  align-items: center;
  padding-left: 35px;
  gap: 8px;
  font-size: 17px;
  flex: none;
}

.task-apps {
  display: flex;
  flex: none;
}

.app {
  width: 66px;
  height: 60px;
  display: flex;
  align-items: center;
  justify-content: center;
  position: relative;
  flex: none;
}

.app-t {
  font: 700 13px "Liberation Sans", sans-serif;
  fill: #fff;
  text-anchor: middle;
}

.app-dot::after {
  content: "";
  position: absolute;
  left: 30px;
  bottom: -3px;
  width: 7px;
  height: 7px;
  border-radius: 50%;
  background: #9b9494;
}

.app-edge {
  background: #4a2e30;
  border-radius: 7px;
}

.app-edge::after {
  content: "";
  position: absolute;
  left: 20px;
  bottom: 1px;
  width: 24px;
  height: 4px;
  border-radius: 2px;
  background: #4cc2ff;
}

.badge-blue {
  width: 24px;
  height: 24px;
  line-height: 23px;
  right: 6px;
  top: 2px;
  background: #4cc2ff;
  color: #111;
  font-size: 15px;
}

.tray {
  margin-left: 19px;
  display: flex;
  flex: none;
}

.tray-btn {
  width: 36px;
  display: flex;
  align-items: center;
  justify-content: center;
}

.tray-mic {
  margin-left: 5px;
}

.tray-wifi {
  margin-left: 13px;
}

.clock {
  margin-left: auto;
  margin-right: 17px;
  text-align: right;
  font-size: 17px;
  line-height: 23px;
}

.notify {
  width: 26px;
  height: 26px;
  margin-right: 28px;
  border-radius: 50%;
  background: #4cc2ff;
  color: #111;
  font-size: 15px;
  line-height: 25px;
  text-align: center;
  flex: none;
}
```
